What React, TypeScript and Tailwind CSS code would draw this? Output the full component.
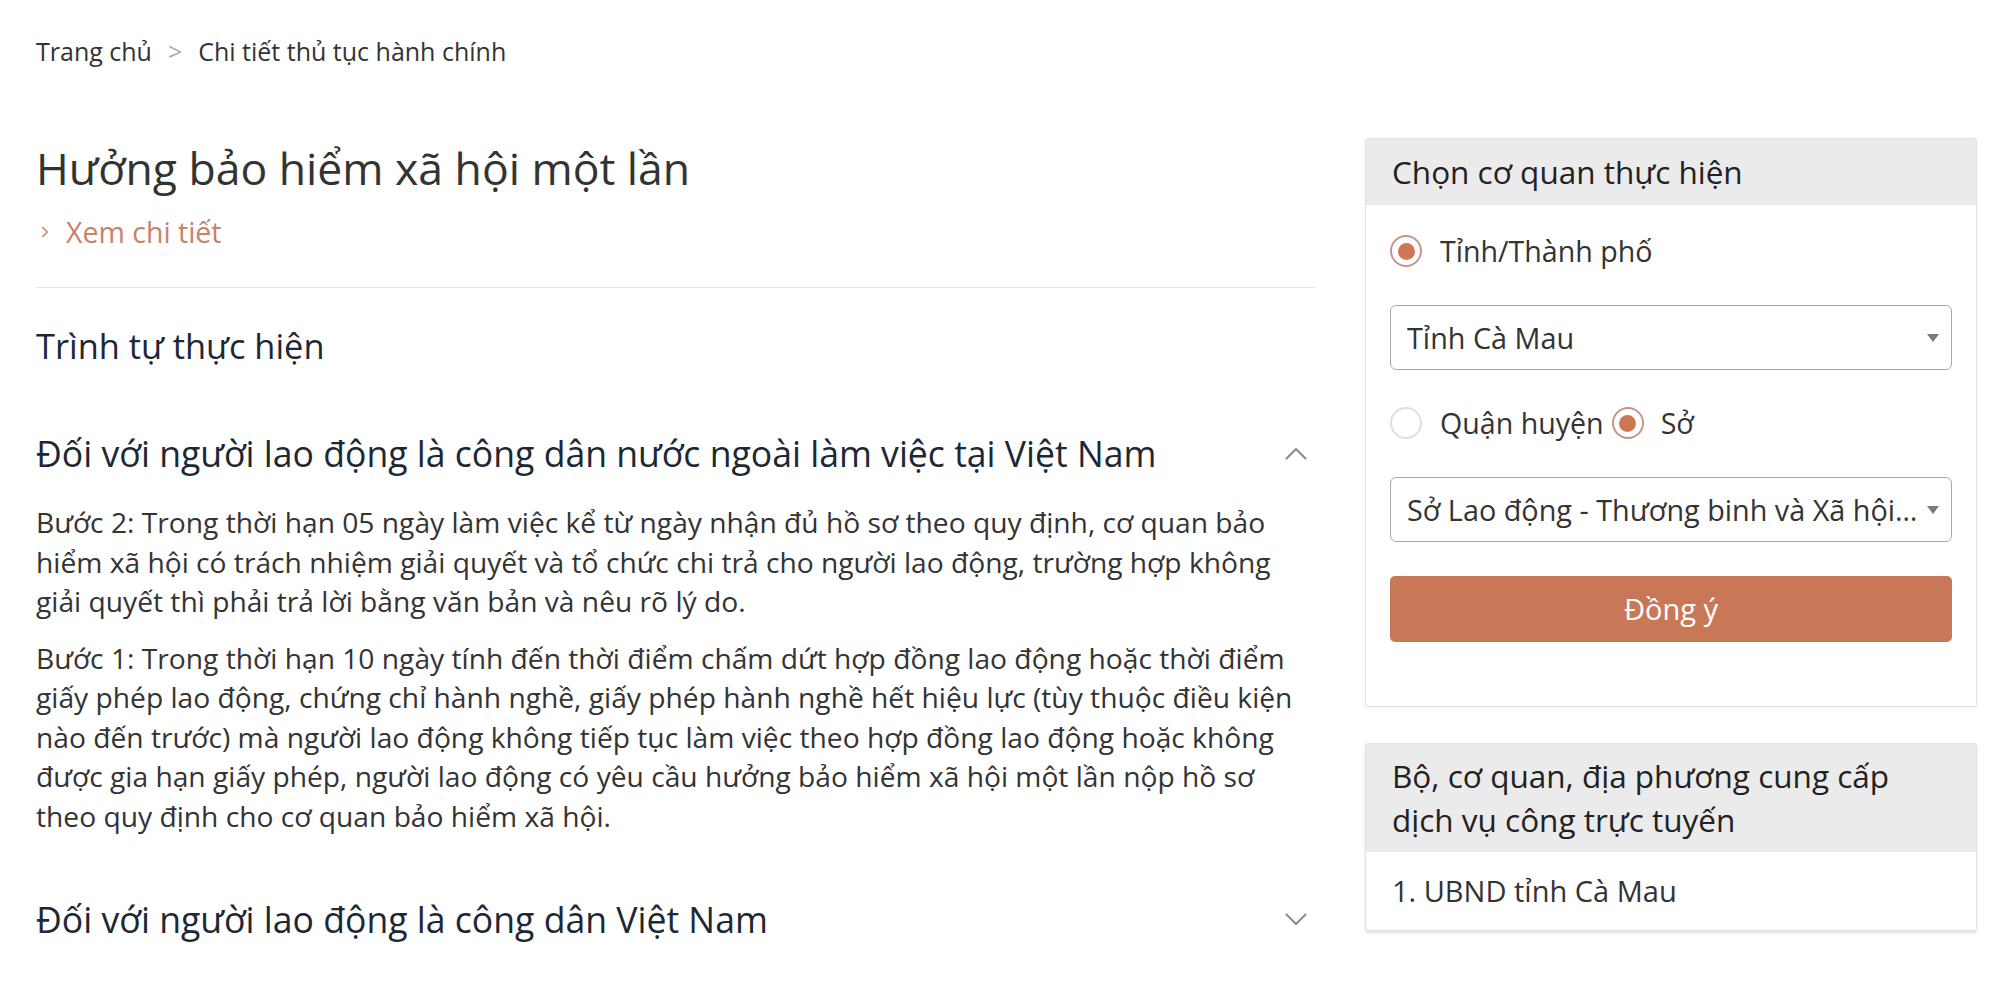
import { ChevronRight } from "lucide-react"

const font = { fontFamily: "'Open Sans', 'Noto Sans', sans-serif" }

function Radio({ checked }: { checked?: boolean }) {
  return (
    <span
      className={
        checked
          ? "flex h-[32px] w-[32px] shrink-0 items-center justify-center rounded-full border-2 border-[#c99584] bg-white"
          : "flex h-[32px] w-[32px] shrink-0 items-center justify-center rounded-full border-2 border-[#dedede] bg-white"
      }
    >
      {checked && <span className="h-[17px] w-[17px] rounded-full bg-[#cf7654]" />}
    </span>
  )
}

function Select({ value }: { value: string }) {
  return (
    <div className="mt-[34px] flex h-[65px] items-center rounded-[6px] border border-[#a9a9a9] pr-[12px] pl-[16px]">
      <span className="min-w-0 flex-1 truncate text-[28.8px] text-[#333]">{value}</span>
      <span className="ml-[8px] h-0 w-0 border-x-[6px] border-t-[8px] border-x-transparent border-t-[#7a7a7a]" />
    </div>
  )
}

function Caret({ up }: { up?: boolean }) {
  return (
    <svg width="22" height="13" viewBox="0 0 22 13" className="mr-[8px] shrink-0" fill="none">
      <polyline
        points={up ? "1.5,11.5 11,2 20.5,11.5" : "1.5,1.5 11,11 20.5,1.5"}
        stroke="#8a8a8a"
        strokeWidth="2"
        strokeLinecap="round"
        strokeLinejoin="round"
      />
    </svg>
  )
}

function StepSection({
  title,
  open,
  children,
}: {
  title: string
  open?: boolean
  children?: React.ReactNode
}) {
  return (
    <section>
      <div className="flex items-center justify-between">
        <h3 className="text-[35.6px] leading-[44px] text-[#1c2834]">{title}</h3>
        <Caret up={open} />
      </div>
      {children}
    </section>
  )
}

export default function App() {
  return (
    <div className="min-h-screen bg-white pr-[23px] pl-[36px]" style={font}>
      <nav className="flex items-center pt-[36px] text-[25px] leading-[30px] text-[#333]">
        <span>Trang chủ</span>
        <span className="mx-[16px] text-[#aaa]">&gt;</span>
        <span>Chi tiết thủ tục hành chính</span>
      </nav>

      <div className="mt-[72px] flex items-start gap-[50px]">
        <main className="min-w-0 flex-1">
          <h1 className="mt-[3px] text-[44.5px] leading-[53px] text-[#333]">
            Hưởng bảo hiểm xã hội một lần
          </h1>
          <a className="mt-[20px] flex items-center text-[28.5px] leading-[36px] text-[#c98168]">
            <ChevronRight className="mr-[12px] h-[18px] w-[18px] text-[#c98168]" strokeWidth={2} />
            Xem chi tiết
          </a>
          <hr className="mt-[37px] border-t border-[#e6e6e6]" />

          <h2 className="mt-[36px] text-[34.4px] leading-[44px] text-[#1c2834]">
            Trình tự thực hiện
          </h2>

          <div className="mt-[63px]">
            <StepSection title="Đối với người lao động là công dân nước ngoài làm việc tại Việt Nam" open>
              <div className="text-[28.2px] leading-[39.5px] text-[#333]">
                <p className="mt-[28px]">
                  Bước 2: Trong thời hạn 05 ngày làm việc kể từ ngày nhận đủ hồ sơ theo quy định, cơ quan bảo
                  hiểm xã hội có trách nhiệm giải quyết và tổ chức chi trả cho người lao động, trường hợp không
                  giải quyết thì phải trả lời bằng văn bản và nêu rõ lý do.
                </p>
                <p className="mt-[17px]">
                  Bước 1: Trong thời hạn 10 ngày tính đến thời điểm chấm dứt hợp đồng lao động hoặc thời điểm
                  giấy phép lao động, chứng chỉ hành nghề, giấy phép hành nghề hết hiệu lực (tùy thuộc điều kiện
                  nào đến trước) mà người lao động không tiếp tục làm việc theo hợp đồng lao động hoặc không
                  được gia hạn giấy phép, người lao động có yêu cầu hưởng bảo hiểm xã hội một lần nộp hồ sơ
                  theo quy định cho cơ quan bảo hiểm xã hội.
                </p>
              </div>
            </StepSection>
          </div>

          <div className="mt-[61px] pb-[40px]">
            <StepSection title="Đối với người lao động là công dân Việt Nam" />
          </div>
        </main>

        <aside className="w-[612px] shrink-0">
          <div className="overflow-hidden rounded-[3px] border border-[#e2e2e2] bg-white shadow-[0_1px_2px_rgba(0,0,0,0.06)]">
            <div className="bg-[#ebebeb] px-[26px] py-[11px] text-[31.5px] leading-[44px] text-[#222]">
              Chọn cơ quan thực hiện
            </div>
            <div className="px-[24px] pt-[26px] pb-[64px]">
              <label className="flex items-center text-[28.6px] leading-[40px] text-[#333]">
                <Radio checked />
                <span className="ml-[18px]">Tỉnh/Thành phố</span>
              </label>
              <Select value="Tỉnh Cà Mau" />
              <div className="mt-[33px] flex items-center text-[28.6px] leading-[40px] text-[#333]">
                <Radio />
                <span className="mr-[8px] ml-[18px]">Quận huyện</span>
                <Radio checked />
                <span className="ml-[17px]">Sở</span>
              </div>
              <Select value="Sở Lao động - Thương binh và Xã hội tỉnh Cà Mau" />
              <button className="mt-[34px] flex h-[66px] w-full items-center justify-center rounded-[5px] bg-[#c97857] text-[29px] text-white">
                Đồng ý
              </button>
            </div>
          </div>

          <div className="mt-[36px] overflow-hidden rounded-[3px] border border-[#e2e2e2] bg-white shadow-[0_2px_3px_rgba(0,0,0,0.12)]">
            <div className="bg-[#ebebeb] px-[26px] py-[10px] text-[31.5px] leading-[44px] text-[#222]">
              Bộ, cơ quan, địa phương cung cấp dịch vụ công trực tuyến
            </div>
            <div className="px-[26px] py-[17px] text-[29px] leading-[44px] text-[#333]">1. UBND tỉnh Cà Mau</div>
          </div>
        </aside>
      </div>
    </div>
  )
}
